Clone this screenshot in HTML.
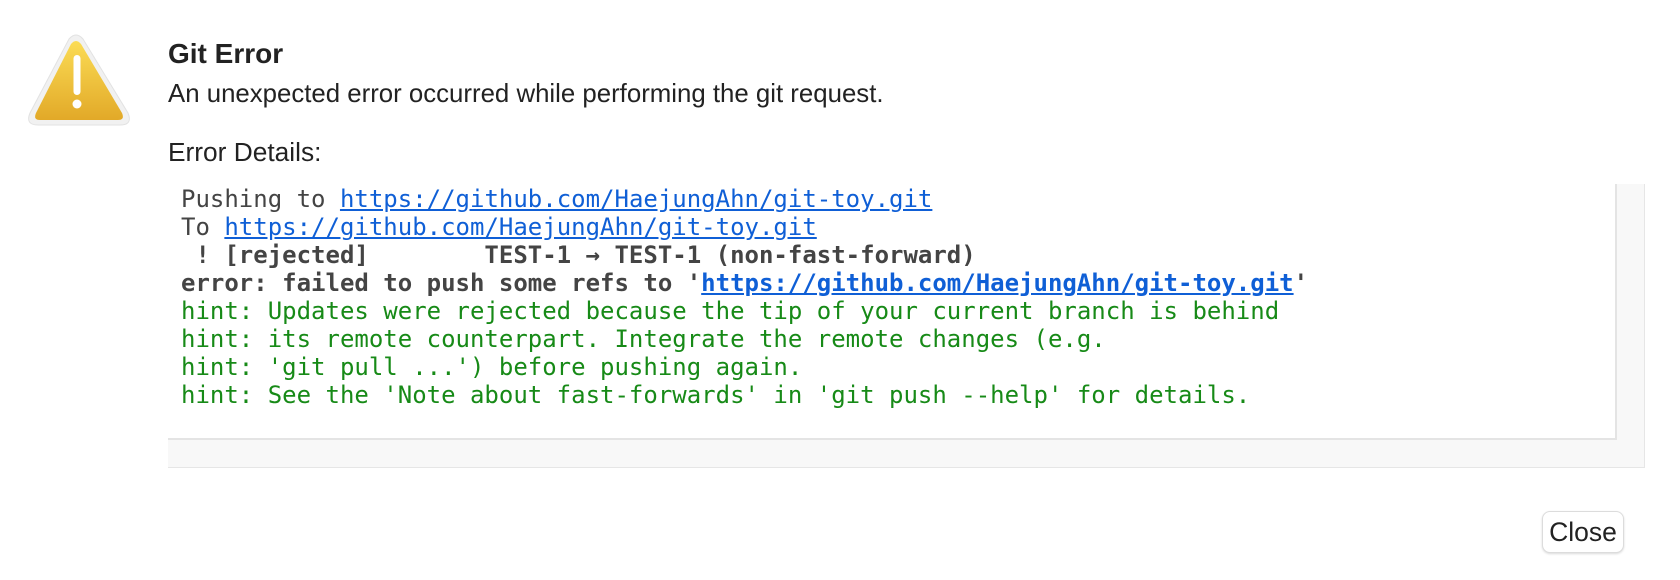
<!DOCTYPE html>
<html><head><meta charset="utf-8"><style>
html,body{margin:0;padding:0;background:#fff;width:1680px;height:580px;overflow:hidden;position:relative;font-family:"Liberation Sans",Helvetica,Arial,sans-serif;color:#222}
.a{position:absolute;white-space:nowrap}
.box{position:absolute;left:168px;top:184px;width:1476px;height:283px;background:#f8f8f8;border-right:1px solid #e6e6e6;border-bottom:1px solid #e6e6e6}
.inner{position:absolute;left:0;top:0;width:1447px;height:254px;background:#fff;border-right:2px solid #e4e4e4;border-bottom:2px solid #e4e4e4}
pre{position:absolute;left:13px;top:1px;margin:0;font-family:"DejaVu Sans Mono","Liberation Mono",monospace;font-size:24px;line-height:28px;color:#444}
a{color:#0f5fd6;text-decoration:underline}
.g{color:#178a17}
b{font-weight:bold}
.btn{position:absolute;left:1542px;top:511px;width:80px;height:40px;border:1px solid #dcdcdc;border-radius:8px;box-shadow:0 1px 2px rgba(0,0,0,.15);font-size:26.5px;line-height:40px;text-align:center;color:#222;background:#fff}
</style></head><body>
<svg class="a" style="left:24px;top:33px" width="110" height="96" viewBox="0 0 110 96">
<defs><linearGradient id="y" x1="0" y1="0" x2="0" y2="1"><stop offset="0" stop-color="#fbdc55"/><stop offset="1" stop-color="#e2a928"/></linearGradient></defs>
<path d="M45 6 Q52 -2 59 6 L104 80 Q109 92 96 92 L14 92 Q1 92 6 80 Z" fill="#f1f1f1" stroke="#e2e2e2" stroke-width="1"/>
<path d="M47 11 Q52 5 57 11 L98 80 Q101 87 94 87 L16 87 Q9 87 12 80 Z" fill="url(#y)"/>
<rect x="49.5" y="22" width="7" height="40" rx="3.5" fill="#fff"/>
<circle cx="53" cy="71" r="4.5" fill="#fff"/>
</svg>
<div class="a" style="left:168px;top:38px;font-size:28px;font-weight:bold;color:#222">Git Error</div>
<div class="a" style="left:168px;top:80px;font-size:25.8px;color:#222">An unexpected error occurred while performing the git request.</div>
<div class="a" style="left:168px;top:137px;font-size:26.3px;color:#222">Error Details:</div>
<div class="box"><div class="inner"><pre>Pushing to <a>https://github.com/HaejungAhn/git-toy.git</a>
To <a>https://github.com/HaejungAhn/git-toy.git</a>
<b> ! [rejected]        TEST-1 → TEST-1 (non-fast-forward)</b>
<b>error: failed to push some refs to '<a>https://github.com/HaejungAhn/git-toy.git</a>'</b>
<span class="g">hint: Updates were rejected because the tip of your current branch is behind
hint: its remote counterpart. Integrate the remote changes (e.g.
hint: 'git pull ...') before pushing again.
hint: See the 'Note about fast-forwards' in 'git push --help' for details.</span></pre></div></div>
<div class="btn">Close</div>
</body></html>
